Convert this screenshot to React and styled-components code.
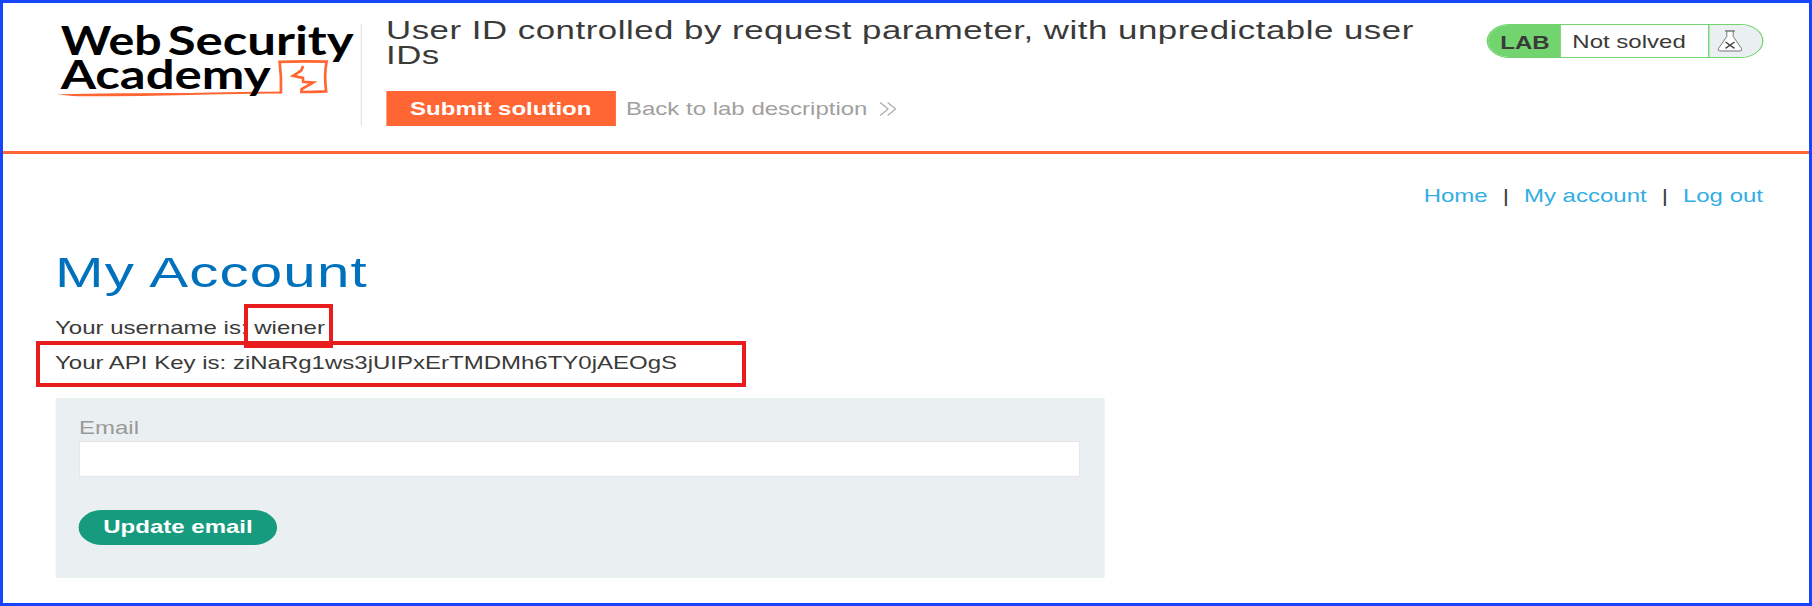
import React from "react";
import styled, { createGlobalStyle } from "styled-components";

/* The page is drawn wide: every horizontal size is multiplied by this factor. */
const STRETCH = 1.35;
const w = (n) => `${n / STRETCH}px`;

const GlobalStyle = createGlobalStyle`
  *, *::before, *::after { box-sizing: border-box; }
  body { margin: 0; background: #fff; }
`;

const Frame = styled.div`
  position: relative;
  width: 1812px;
  height: 606px;
  overflow: hidden;
  border: 3px solid #1745ff;
  background: #fff;
`;

const Stage = styled.div`
  width: ${w(1806)};
  height: 600px;
  transform: scaleX(${STRETCH});
  transform-origin: 0 0;
  font-family: "Liberation Sans", Arial, sans-serif;
  font-size: 17.8px;
  line-height: 35px;
  color: #3a3a39;
`;

const Header = styled.header`
  display: flex;
  align-items: flex-start;
  height: 151px;
  padding: 21px ${w(46)} 0 ${w(52)};
  border-bottom: 3.4px solid #ff6633;
`;

const LogoBox = styled.a`
  display: flex;
  width: ${w(307)};
  height: 102px;
  border-right: 1px solid #e4e4e4;
`;

const Drawing = styled.svg`
  display: block;
  flex: none;
  width: ${(p) => w(p.$w)};
  height: ${(p) => p.$h}px;
  overflow: visible;
`;

const TitleBlock = styled.div`
  display: flex;
  flex-direction: column;
  justify-content: space-between;
  width: ${w(1060)};
  height: 108px;
  margin: -6px 0 0 ${w(24)};
`;

const Title = styled.h2`
  margin: 0;
  font-size: 25.8px;
  font-weight: 400;
  line-height: 25px;
  letter-spacing: 0.38px;
  white-space: nowrap;
`;

const Actions = styled.div`
  display: flex;
  align-items: center;
  height: 35px;
`;

const Button = styled.button`
  display: block;
  flex: none;
  width: ${(p) => w(p.$w)};
  height: 35px;
  padding: 0;
  border: 0;
  border-radius: ${(p) => (p.$round ? "17.5px" : "0")};
  background: ${(p) => (p.$round ? "#169b7f" : "#ff6633")};
  color: #fff;
  font: 700 17.8px/34px "Liberation Sans", Arial, sans-serif;
  text-align: center;
  white-space: nowrap;
`;

const BackLink = styled.a`
  display: flex;
  align-items: center;
  gap: ${w(12)};
  margin-left: ${w(10.5)};
  color: #a0a0a0;
  line-height: 34px;
  white-space: nowrap;
`;

const Status = styled.div`
  display: flex;
  width: ${w(276)};
  height: 34px;
  margin-left: auto;
  overflow: hidden;
  border: 1px solid #72d46e;
  border-radius: 17px;
  white-space: nowrap;
`;

const StatusTag = styled.div`
  width: ${w(73)};
  padding-left: ${w(12)};
  background: #72d46e;
  font-weight: 700;
  line-height: 36px;
`;

const StatusText = styled.div`
  flex: 1;
  padding-left: ${w(11)};
  line-height: 34px;
`;

const StatusIcon = styled.div`
  display: flex;
  align-items: center;
  width: ${w(54)};
  padding-left: ${w(9)};
  border-left: 1px solid #72d46e;
  background: #eaeff2;
`;

const Content = styled.main`
  padding: 25px ${w(46)} 0 ${w(52)};
`;

const Nav = styled.nav`
  display: flex;
  justify-content: flex-end;
  gap: ${w(15)};
  height: 35px;
  line-height: 35px;
`;

const NavLink = styled.a`
  color: #33aee3;
`;

const Heading = styled.h1`
  margin: 33px 0 14px;
  color: #0071bc;
  font-size: 43.2px;
  font-weight: 400;
  line-height: 50px;
  letter-spacing: 0.85px;
`;

const Info = styled.p`
  margin: 0;
  height: 35px;
  line-height: 35px;
  white-space: nowrap;
`;

const Form = styled.form`
  width: ${w(1049)};
  height: 180px;
  margin-top: 17px;
  padding: 12px ${w(24)} 0;
  background: #eaeff2;
`;

const Label = styled.label`
  display: block;
  height: 31px;
  color: #999;
  line-height: 36px;
`;

const Input = styled.input`
  display: block;
  width: 100%;
  height: 35.5px;
  margin-bottom: 33px;
  padding: 0 ${w(8)};
  border: 1px solid #e6e6e6;
  outline: none;
  background: #fff;
`;

const Marker = styled.div`
  position: absolute;
  left: ${(p) => p.$x}px;
  top: ${(p) => p.$y}px;
  width: ${(p) => p.$w}px;
  height: ${(p) => p.$h}px;
  border: 4px solid #e91d1d;
`;

const Logo = () => (
  <Drawing $w={306} $h={102} viewBox="55 24 306 102" preserveAspectRatio="none">
    <path d="M56 94.3 Q130 92.8 190 93 Q245 91.8 281 91.4 L281 93.6 Q240 93.8 190 95 Q110 96.8 72 95.9 Z" fill="#ff6633" />
    <path d="M280.3 93.2 Q281 77 279 61.8 Q300 61 326 61.6 Q323.3 75 325.5 91.4 Q313 92 300.8 92 L301 89 L312.5 82.6 L302.5 81.8 L302.3 77.8 L292.5 75.9 L300.5 70.5 L302.5 66" fill="none" stroke="#ff6633" strokeWidth="2.7" />
    <g fill="#000" fontFamily="Lato, sans-serif" fontWeight="700" fontSize="40">
      <text x="60" y="54.6" textLength="101" lengthAdjust="spacingAndGlyphs">Web</text>
      <text x="167" y="54.6" textLength="186" lengthAdjust="spacingAndGlyphs">Security</text>
      <text x="60" y="88.8" textLength="210" lengthAdjust="spacingAndGlyphs">Academy</text>
    </g>
  </Drawing>
);

const Chevrons = () => (
  <Drawing $w={18} $h={14} viewBox="0 0 18 14" preserveAspectRatio="none">
    <path d="M1 .5 L9 7 L1 13.5 M8.5 .5 L16.5 7 L8.5 13.5" fill="none" stroke="#a8a8a8" strokeWidth="1.1" />
  </Drawing>
);

const Flask = () => (
  <Drawing $w={25} $h={22} viewBox="0 0 25 22" preserveAspectRatio="none">
    <path d="M9.3 1 V6.5 L1 18.5 Q0 20.8 2.5 21 H22.5 Q25 20.8 24 18.5 L15.7 6.5 V1" fill="#fff" stroke="#777" strokeWidth="1" />
    <path d="M7.6 1 H17.4" stroke="#777" strokeWidth="1.3" />
    <path d="M8 12 L17 18.4 M17 12 L8 18.4" stroke="#444" strokeWidth="1.4" />
  </Drawing>
);

export default function App() {
  return (
    <>
      <GlobalStyle />
      <Frame>
        <Stage>
          <Header>
            <LogoBox><Logo /></LogoBox>
            <TitleBlock>
              <Title>
                User ID controlled by request parameter, with unpredictable user<br />IDs
              </Title>
              <Actions>
                <Button type="button" $w={229.5}>Submit solution</Button>
                <BackLink>Back to lab description <Chevrons /></BackLink>
              </Actions>
            </TitleBlock>
            <Status>
              <StatusTag>LAB</StatusTag>
              <StatusText>Not solved</StatusText>
              <StatusIcon><Flask /></StatusIcon>
            </Status>
          </Header>
          <Content>
            <Nav>
              <NavLink>Home</NavLink><span>|</span>
              <NavLink>My account</NavLink><span>|</span>
              <NavLink>Log out</NavLink>
            </Nav>
            <Heading>My Account</Heading>
            <Info>Your username is: wiener</Info>
            <Info>Your API Key is: ziNaRg1ws3jUIPxErTMDMh6TY0jAEOgS</Info>
            <Form>
              <Label>Email</Label>
              <Input type="email" aria-label="Email" />
              <Button type="button" $round $w={198}>Update email</Button>
            </Form>
          </Content>
        </Stage>
        <Marker $x={241} $y={301} $w={89} $h={44} />
        <Marker $x={33} $y={338} $w={710} $h={46} />
      </Frame>
    </>
  );
}
